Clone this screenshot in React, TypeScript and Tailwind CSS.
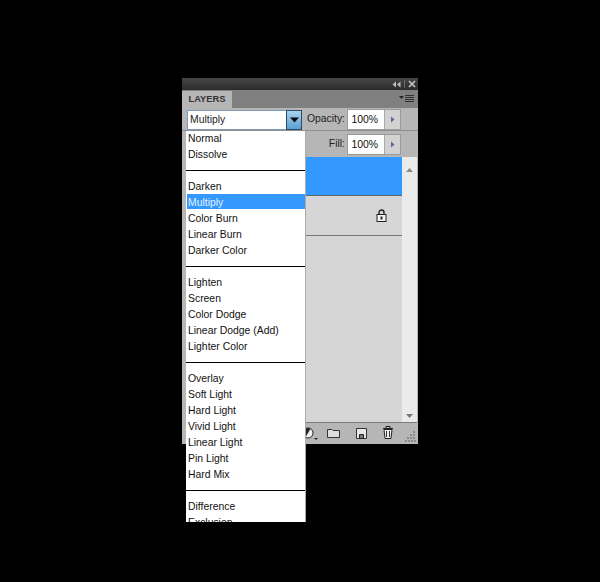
const groups = [
  ["Normal", "Dissolve"],
  ["Darken", "Multiply", "Color Burn", "Linear Burn", "Darker Color"],
  ["Lighten", "Screen", "Color Dodge", "Linear Dodge (Add)", "Lighter Color"],
  ["Overlay", "Soft Light", "Hard Light", "Vivid Light", "Linear Light", "Pin Light", "Hard Mix"],
  ["Difference", "Exclusion"],
];

function Stepper() {
  return (
    <div className="w-[16px] h-[19px] bg-[#d2d2d2] border-l border-[#a8a8a8] flex items-center justify-center">
      <svg width="5" height="7" viewBox="0 0 5 7"><path d="M1 0.5 L4.5 3.5 L1 6.5 Z" fill="#5a6a96" /></svg>
    </div>
  );
}

function Field() {
  return (
    <div className="flex border border-[#9a9a9a]">
      <div className="w-[36px] h-[19px] bg-white text-right pr-[6px] leading-[20px] text-[#111]">100%</div>
      <Stepper />
    </div>
  );
}

export default function App() {
  return (
    <div
      className="w-[600px] h-[582px] bg-black pl-[182px] pt-[78px] overflow-hidden text-[10.4px] text-[#111]"
      style={{ fontFamily: '"Liberation Sans", Arial, sans-serif' }}
    >
      <div className="relative w-[236px] h-[366px] bg-[#b6b6b6] flex flex-col">
        <div className="h-[12px] bg-gradient-to-b from-[#474747] to-[#2c2c2c] flex items-center justify-end gap-[3px] pr-[2px] shrink-0">
          <svg width="9" height="7" viewBox="0 0 9 7"><path d="M4 0.5 L0.5 3.5 L4 6.5 Z M8.5 0.5 L5 3.5 L8.5 6.5 Z" fill="#bdbdbd" /></svg>
          <div className="w-px h-[8px] bg-[#666]" />
          <svg width="8" height="8" viewBox="0 0 8 8"><path d="M1 1 L7 7 M7 1 L1 7" stroke="#c8c8c8" strokeWidth="1.6" /></svg>
        </div>
        <div className="h-[18px] bg-[#808080] flex items-start justify-between shrink-0">
          <div className="w-[50px] h-[17px] bg-[#b6b6b6] mt-[1px] text-center font-bold text-[9.3px] leading-[16px] text-[#333]">LAYERS</div>
          <svg className="mt-[4px] mr-[3px]" width="16" height="9" viewBox="0 0 16 9">
            <path d="M0 2 L5 2 L2.5 5 Z" fill="#222" />
            <path d="M6 1.5 H15 M6 3.5 H15 M6 5.5 H15 M6 7.5 H15" stroke="#2e2e2e" strokeWidth="1" />
          </svg>
        </div>
        <div className="h-[23px] flex items-center justify-end gap-[2px] pr-[17px] border-b border-[#8e8e8e] shrink-0">
          <span className="text-[#222]">Opacity:</span>
          <Field />
        </div>
        <div className="h-[26px] flex items-center justify-end gap-[2px] pr-[17px] shrink-0">
          <span className="text-[#222]">Fill:</span>
          <Field />
        </div>
        <div className="flex flex-1 ml-[4px] mr-[1px] min-h-0 bg-[#d6d6d6] border-b border-[#7c7c7c]">
          <div className="flex-1 flex flex-col">
            <div className="h-[39px] bg-[#3399ff] border-b border-[#666]" />
            <div className="h-[40px] border-b border-[#777] flex items-center justify-end pr-[15px]">
              <svg width="11" height="13" viewBox="0 0 11 13">
                <path d="M3 6 V3.5 A2.5 2.5 0 0 1 8 3.5 V6" fill="none" stroke="#222" strokeWidth="1.4" />
                <rect x="1" y="5.5" width="9" height="7" fill="#f4f4f4" stroke="#222" />
                <rect x="4.5" y="7.5" width="2" height="3" fill="#222" />
              </svg>
            </div>
          </div>
          <div className="w-[15px] bg-[#ebebeb] flex flex-col items-center justify-between pt-[11px] pb-[4px]">
            <svg width="7" height="4" viewBox="0 0 7 4"><path d="M0 4 L3.5 0 L7 4 Z" fill="#8a8a8a" /></svg>
            <svg width="7" height="4" viewBox="0 0 7 4"><path d="M0 0 L3.5 4 L7 0 Z" fill="#777" /></svg>
          </div>
        </div>
        <div className="h-[21px] flex items-center justify-end shrink-0 pr-[2px]">
          <svg width="15" height="14" viewBox="0 0 15 14">
            <circle cx="5" cy="6" r="5" fill="#f2f2f2" stroke="#222" />
            <path d="M5 1 A5 5 0 0 0 5 11 Z" fill="#222" transform="rotate(30 5 6)" />
            <path d="M11 11 H15 L13 13 Z" fill="#222" />
          </svg>
          <svg width="13" height="11" viewBox="0 0 13 11" className="ml-[9px]">
            <path d="M0.5 9.5 V1.5 H5 L6 2.5 H12.5 V9.5 Z" fill="#dedede" stroke="#333" />
          </svg>
          <svg width="11" height="11" viewBox="0 0 11 11" className="ml-[16px]">
            <path d="M0.5 0.5 H10.5 V10.5 H0.5 Z" fill="#e8e8e8" stroke="#333" />
            <path d="M3.5 6.5 H7.5 V10.5 H3.5 Z" fill="#777" stroke="#222" />
          </svg>
          <svg width="12" height="13" viewBox="0 0 12 13" className="ml-[15px] mb-[2px]">
            <path d="M1 2.5 H11 M4 2 V0.5 H8 V2" fill="none" stroke="#222" />
            <path d="M2 3.5 H10 L9 12.5 H3 Z" fill="#eee" stroke="#222" />
            <path d="M4.5 5 V11 M7.5 5 V11" stroke="#333" />
          </svg>
          <svg width="11" height="11" viewBox="0 0 11 11" fill="#8a8a8a" className="mt-[6px] ml-[11px]">
            <rect x="8" y="0" width="2" height="2" />
            <rect x="5" y="3" width="2" height="2" /><rect x="8" y="3" width="2" height="2" />
            <rect x="2" y="6" width="2" height="2" /><rect x="5" y="6" width="2" height="2" /><rect x="8" y="6" width="2" height="2" />
            <rect x="0" y="9" width="2" height="2" /><rect x="3" y="9" width="2" height="2" /><rect x="6" y="9" width="2" height="2" /><rect x="9" y="9" width="2" height="2" />
          </svg>
        </div>

        <div className="absolute left-[5px] top-[32px] w-[115px] h-[20px] flex">
          <div className="flex-1 bg-white border border-[#7f9db9] border-r-0 pl-[2px] leading-[18px] text-[#222]">Multiply</div>
          <div className="w-[16px] bg-gradient-to-b from-[#a9d3ee] to-[#5b9fcf] border border-[#2c4a6a] flex items-center justify-center">
            <svg width="9" height="6" viewBox="0 0 9 6"><path d="M0 0.5 H9 L4.5 5.5 Z" fill="#0a0a0a" /></svg>
          </div>
        </div>

        <div className="absolute left-[4px] top-[53px] w-[120px] h-[391px] bg-white overflow-hidden border-r border-[#aaa]">
          <div className="-mt-[1px]">
            {groups.map((g, i) => (
              <div key={i}>
                {i > 0 && (
                  <div className="h-[16px] flex items-center">
                    <div className="w-full h-px bg-black" />
                  </div>
                )}
                {g.map((t) => (
                  <div
                    key={t}
                    className={
                      t === "Multiply"
                        ? "h-[15px] mb-[1px] ml-[1px] pl-[1px] leading-[18px] bg-[#3399ff] text-[#e4f0ff]"
                        : "h-[16px] pl-[2px] leading-[18px] text-[#111]"
                    }
                  >
                    {t}
                  </div>
                ))}
              </div>
            ))}
          </div>
        </div>
      </div>
    </div>
  );
}
